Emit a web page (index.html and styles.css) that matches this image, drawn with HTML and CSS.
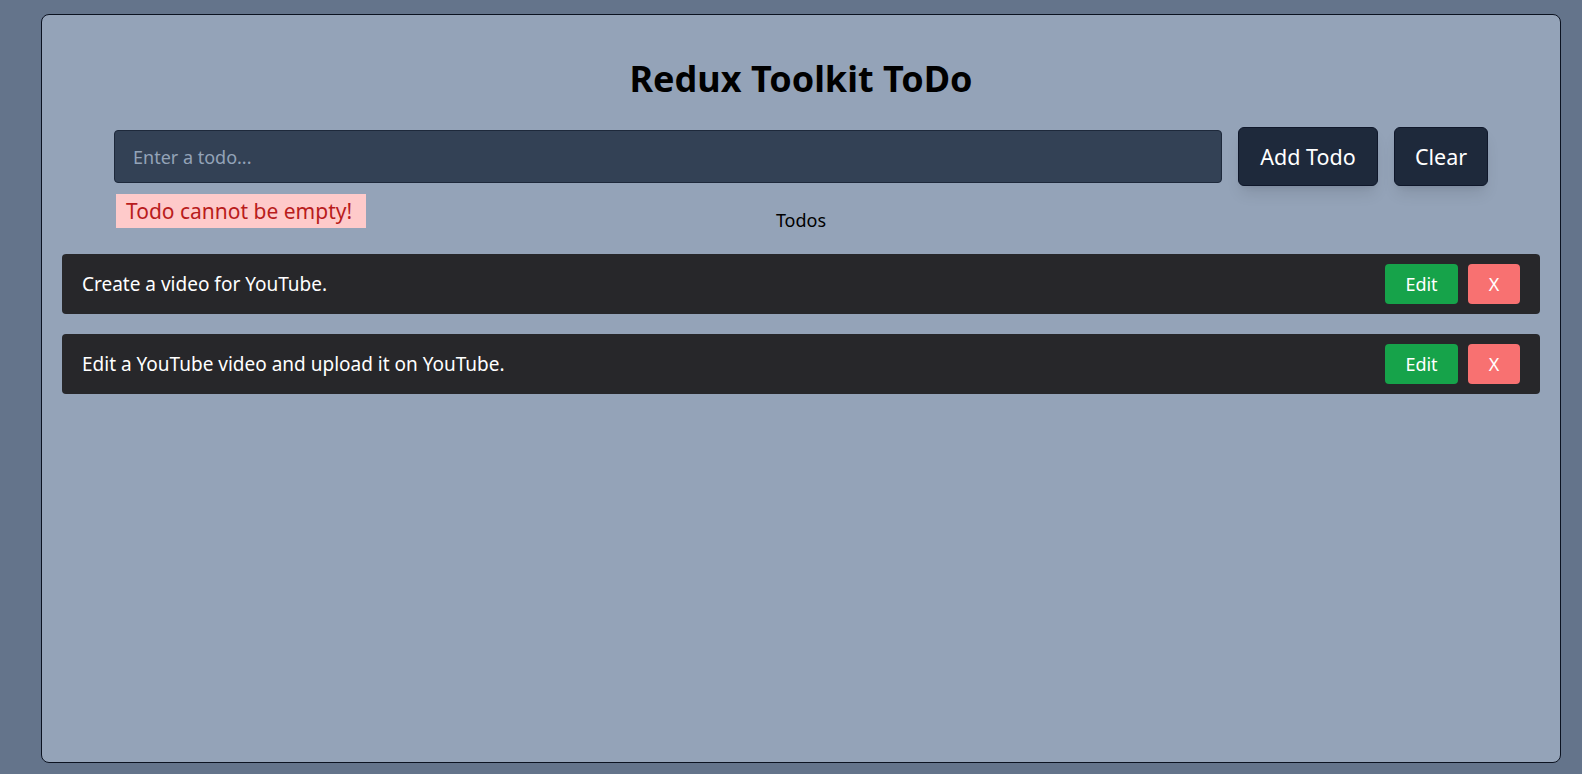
FILE: index.html
```html
<!DOCTYPE html>
<html lang="en">
<head>
<meta charset="utf-8">
<title>Redux Toolkit ToDo</title>
<link rel="stylesheet" href="styles.css">
</head>
<body>
<main class="card">
  <h1 class="title">Redux Toolkit ToDo</h1>
  <form class="todo-form">
    <div class="input-wrap">
      <input class="todo-input" type="text" placeholder="Enter a todo...">
      <div class="error">Todo cannot be empty!</div>
    </div>
    <button type="button" class="btn-dark btn-add">Add Todo</button>
    <button type="button" class="btn-dark btn-clear">Clear</button>
  </form>
  <div class="list-label">Todos</div>
  <ul class="todo-list">
    <li class="todo-item">
      <span class="todo-text">Create a video for YouTube.</span>
      <div class="todo-actions">
        <button type="button" class="btn-edit">Edit</button>
        <button type="button" class="btn-delete">X</button>
      </div>
    </li>
    <li class="todo-item">
      <span class="todo-text">Edit a YouTube video and upload it on YouTube.</span>
      <div class="todo-actions">
        <button type="button" class="btn-edit">Edit</button>
        <button type="button" class="btn-delete">X</button>
      </div>
    </li>
  </ul>
</main>
</body>
</html>
```
FILE: styles.css
```css
* { box-sizing: border-box; }
html, body { height: 100%; }
body {
  margin: 0;
  padding: 14px 21px 11px 41px;
  background: #64748b;
  font-family: "Noto Sans", "Open Sans", sans-serif;
  color: #000;
}
.card {
  height: 100%;
  background: #94a3b8;
  border: 1px solid #0b1220;
  border-radius: 8px;
  padding: 20px;
}
.title {
  margin: 24px 0 0;
  text-align: center;
  font-size: 36px;
  line-height: 40px;
  font-weight: 700;
}
.todo-form {
  display: flex;
  align-items: center;
  gap: 16px;
  margin: 28px 52px 0;
}
.input-wrap {
  flex: 1;
  position: relative;
}
.todo-input {
  display: block;
  width: 100%;
  height: 53px;
  background: #334155;
  border: 1px solid #1e293b;
  border-radius: 4px;
  padding: 0 18px;
  font-family: inherit;
  font-size: 18px;
  color: #fff;
  outline: none;
}
.todo-input::placeholder { color: #94a3b8; }
.error {
  position: absolute;
  left: 2px;
  top: 64px;
  width: 250px;
  background: #fecaca;
  color: #b91c1c;
  font-size: 21px;
  line-height: 34px;
  padding: 0 10px;
  white-space: nowrap;
}
.btn-dark {
  height: 59px;
  background: #1e293b;
  border: 1px solid #0f172a;
  border-radius: 6px;
  color: #fff;
  font-family: inherit;
  font-size: 21.5px;
  padding: 0;
  box-shadow: 0 10px 15px -3px rgba(0,0,0,0.1), 0 4px 6px -4px rgba(0,0,0,0.1);
}
.btn-add { width: 140px; }
.btn-clear { width: 94px; }
.list-label {
  margin-top: 20px;
  text-align: center;
  font-size: 18px;
  line-height: 28px;
}
.todo-list {
  list-style: none;
  margin: 20px 0 0;
  padding: 0;
  display: flex;
  flex-direction: column;
  gap: 20px;
}
.todo-item {
  height: 60px;
  display: flex;
  align-items: center;
  justify-content: space-between;
  background: #27272a;
  border-radius: 4px;
  padding: 0 20px;
}
.todo-text {
  color: #fff;
  font-size: 19px;
}
.todo-actions {
  display: flex;
  gap: 10px;
}
.btn-edit, .btn-delete {
  height: 40px;
  border: 0;
  border-radius: 4px;
  color: #fff;
  font-family: inherit;
  font-size: 18px;
}
.btn-edit { width: 73px; background: #16a34a; }
.btn-delete { width: 52px; background: #f87171; }
```
